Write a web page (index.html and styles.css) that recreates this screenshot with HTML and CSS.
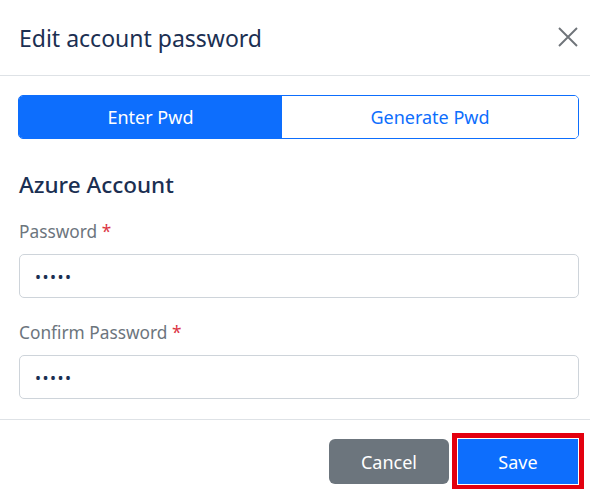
FILE: index.html
```html
<!DOCTYPE html>
<html lang="en">
<head>
<meta charset="utf-8">
<title>Edit account password</title>
<link rel="stylesheet" href="styles.css">
</head>
<body>
<div class="modal">
  <header class="modal-header">
    <h5 class="modal-title">Edit account password</h5>
    <button class="close" type="button" aria-label="Close">
      <svg width="20" height="20" viewBox="0 0 20 20"><path d="M1 1 L19 19 M19 1 L1 19" stroke="#6f7479" stroke-width="1.9" fill="none"/></svg>
    </button>
  </header>
  <div class="modal-body">
    <div class="toggle">
      <button class="toggle-btn active" type="button">Enter Pwd</button>
      <button class="toggle-btn" type="button">Generate Pwd</button>
    </div>
    <h5 class="section-title">Azure Account</h5>
    <label class="field-label">Password <span class="req">*</span></label>
    <input class="field" type="password" value="abcde">
    <label class="field-label">Confirm Password <span class="req">*</span></label>
    <input class="field" type="password" value="abcde">
  </div>
  <footer class="modal-footer">
    <button class="btn btn-cancel" type="button">Cancel</button>
    <button class="btn btn-save" type="button">Save</button>
  </footer>
</div>
</body>
</html>
```

FILE: styles.css
```css
* { box-sizing: border-box; }
html, body { margin: 0; padding: 0; background: #fff; overflow: hidden; }
body { font-family: "Noto Sans", "Open Sans", sans-serif; color: #1b2f52; }
.modal { width: 590px; height: 489px; background: #fff; }
.modal-header {
  height: 76px;
  border-bottom: 1px solid #dee2e6;
  display: flex;
  align-items: center;
  justify-content: space-between;
  padding: 0 12px 0 19px;
}
.modal-title { margin: 0; font-size: 23px; font-weight: 400; color: #1b2f52; }
.close { border: 0; background: none; padding: 0; width: 20px; height: 20px; display: flex; margin-top: -2px; }
.modal-body { padding: 19px 11px 0 18px; display: flex; flex-direction: column; }
.toggle { display: flex; height: 44px; border: 1px solid #0d6efd; border-radius: 5px; overflow: hidden; }
.toggle-btn {
  flex: 1 1 auto; border: 0; margin: 0; padding: 0; font-family: inherit; font-size: 18px;
  background: #fff; color: #0d6efd;
}
.toggle-btn.active { background: #0d6efd; color: #fff; }
.section-title { margin: 31px 0 0 1px; font-size: 22.5px; font-weight: 500; line-height: 30px; color: #1b2f52; }
.field-label { margin: 20px 0 0 1px; font-size: 17.3px; line-height: 24px; color: #6c757d; }
.req { color: #dc3545; }
.field {
  margin: 10px 0 0 1px; height: 44px; border: 1px solid #ced4da; border-radius: 5px;
  padding: 2px 15px 0; font-family: inherit; font-size: 16px; color: #1b2f52; letter-spacing: 1.5px;
}
.field + .field-label { margin-top: 23px; }
.modal-footer {
  margin-top: 20px; border-top: 1px solid #dee2e6;
  display: flex; justify-content: flex-end; gap: 9px; padding: 19px 12px 0 0;
}
.btn {
  height: 45px; width: 120px; border: 0; border-radius: 6px; font-family: inherit; font-size: 18px; color: #fff;
}
.btn-cancel { background: #6c757d; }
.btn-save { background: #0d6efd; border-radius: 0; outline: 5px solid #e3000f; outline-offset: 1px; }
```
